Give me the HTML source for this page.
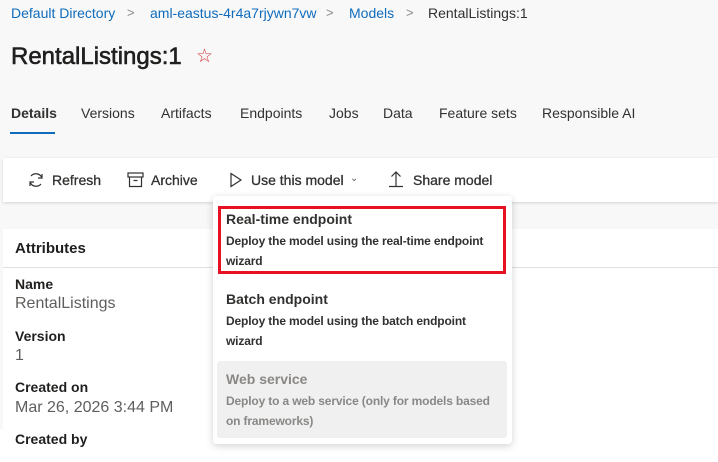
<!DOCTYPE html>
<html><head><style>
*{margin:0;padding:0;box-sizing:border-box}
body{width:718px;height:462px;overflow:hidden;background:#f8f8f8;font-family:"Segoe UI","Liberation Sans",sans-serif;color:#201f1e;position:relative}
.a{position:absolute;white-space:nowrap}
.bc{font-size:14px;color:#0f6cbd;top:5px}
.sep{font-size:13px;color:#888;top:5px}
.tab{font-size:14px;top:105px;color:#323130}
.tb{font-size:14px;top:172px;color:#323130;-webkit-text-stroke:0.3px #323130}
.lab{font-size:14px;font-weight:bold;left:15px}
.val{font-size:16px;left:15px;color:#605e5c}
.mi{left:226px}
.mt{font-size:14px;font-weight:bold;color:#323130}
.md{font-size:12px;font-weight:bold;color:#323130;line-height:20px;letter-spacing:-0.15px}
</style></head><body>
<div class="a bc" style="left:11px">Default Directory</div>
<div class="a sep" style="left:127px">&gt;</div>
<div class="a bc" style="left:150px">aml-eastus-4r4a7rjywn7vw</div>
<div class="a sep" style="left:326px">&gt;</div>
<div class="a bc" style="left:349px">Models</div>
<div class="a sep" style="left:406px">&gt;</div>
<div class="a" style="left:428px;top:5px;font-size:14px;color:#323130">RentalListings:1</div>
<div class="a" style="left:11px;top:43px;font-size:24px;color:#201f1e;-webkit-text-stroke:0.6px #201f1e">RentalListings:1</div>
<div class="a" style="left:196px;top:45px;font-size:19px;color:#d13438">☆</div>
<div class="a tab" style="left:11px;font-weight:bold">Details</div>
<div style="position:absolute;left:10px;top:132px;width:45px;height:2px;background:#0f6cbd"></div>
<div class="a tab" style="left:81px">Versions</div>
<div class="a tab" style="left:161px">Artifacts</div>
<div class="a tab" style="left:240px">Endpoints</div>
<div class="a tab" style="left:329px">Jobs</div>
<div class="a tab" style="left:383px">Data</div>
<div class="a tab" style="left:439px">Feature sets</div>
<div class="a tab" style="left:542px">Responsible AI</div>
<div style="position:absolute;left:3px;top:158px;width:715px;height:44px;background:#fff;box-shadow:0 1px 3px rgba(0,0,0,.15)"></div>
<svg class="a" style="left:27px;top:171px" width="18" height="18" viewBox="0 0 18 18" fill="none" stroke="#323130" stroke-width="1.2"><path d="M4 5A6.5 6.5 0 0 1 15 7M14 13A6.5 6.5 0 0 1 3 11"/><path d="M15 3v4h-4M3 15v-4h4"/></svg>
<div class="a tb" style="left:52px">Refresh</div>
<svg class="a" style="left:127px;top:172px" width="18" height="16" viewBox="0 0 18 16" fill="none" stroke="#323130" stroke-width="1.2"><rect x="1" y="1" width="15" height="4"/><path d="M2.5 5v9.5h12V5M6.5 8.5h4"/></svg>
<div class="a tb" style="left:151px">Archive</div>
<svg class="a" style="left:229px;top:172px" width="14" height="16" viewBox="0 0 14 16" fill="none" stroke="#323130" stroke-width="1.2"><path d="M2 1.5v13l10-6.5z"/></svg>
<div class="a tb" style="left:251px">Use this model</div>
<div class="a" style="left:350px;top:173px;font-size:10px;color:#605e5c">⌄</div>
<svg class="a" style="left:388px;top:170px" width="16" height="18" viewBox="0 0 16 18" fill="none" stroke="#323130" stroke-width="1.2"><path d="M8 16V2M3.5 6.5L8 2l4.5 4.5M1 16.5h14"/></svg>
<div class="a tb" style="left:413px">Share model</div>
<div style="position:absolute;left:3px;top:229px;width:715px;height:200px;background:#fff"></div>
<div style="position:absolute;left:0;top:429px;width:718px;height:33px;background:#fff"></div>
<div class="a" style="left:15px;top:240px;font-size:15px;font-weight:bold">Attributes</div>
<div style="position:absolute;left:3px;top:267px;width:715px;height:1px;background:#e1dfdd"></div>
<div class="a lab" style="top:276px">Name</div>
<div class="a val" style="top:295px">RentalListings</div>
<div class="a lab" style="top:328px">Version</div>
<div class="a val" style="top:347px">1</div>
<div class="a lab" style="top:379px">Created on</div>
<div class="a val" style="top:399px">Mar 26, 2026 3:44 PM</div>
<div class="a lab" style="top:431px">Created by</div>
<div style="position:absolute;left:213px;top:196px;width:299px;height:248px;background:#fff;border-radius:4px;box-shadow:0 2px 8px rgba(0,0,0,.18)"></div>
<div style="position:absolute;left:218px;top:206px;width:288px;height:68px;border:3px solid #e81123"></div>
<div style="position:absolute;left:217px;top:361px;width:290px;height:77px;background:#f0f0f0;border-radius:3px"></div>
<div class="a mi mt" style="top:211px">Real-time endpoint</div>
<div class="a mi md" style="top:231px">Deploy the model using the real-time endpoint<br>wizard</div>
<div class="a mi mt" style="top:291px">Batch endpoint</div>
<div class="a mi md" style="top:311px">Deploy the model using the batch endpoint<br>wizard</div>
<div class="a mi mt" style="top:371px;color:#8a8886">Web service</div>
<div class="a mi md" style="top:391px;color:#8a8886">Deploy to a web service (only for models based<br>on frameworks)</div>
</body></html>
